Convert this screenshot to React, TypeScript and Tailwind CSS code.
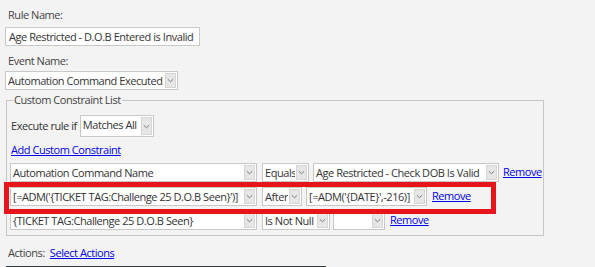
import React from "react"

const Chevron = () => (
  <svg width="7" height="5" viewBox="0 0 7 5">
    <path d="M0.8 1.2 L3.5 3.8 L6.2 1.2" stroke="#7a7a7a" strokeWidth="1" fill="none" />
  </svg>
)

function Select({ value, className }: { value: string; className: string }) {
  return (
    <div className={`flex h-[19px] shrink-0 bg-white border border-[#c8c8c8] ${className}`}>
      <span className="flex-1 pl-[2px] whitespace-nowrap overflow-hidden leading-[17px]">{value}</span>
      <span className="w-[11px] m-[1px] flex items-center justify-center bg-[#e6e6e6] border border-[#d6d6d6]">
        <Chevron />
      </span>
    </div>
  )
}

const Remove = ({ className = "" }: { className?: string }) => (
  <a className={`text-[#0000ee] underline leading-[17px] ${className}`}>Remove</a>
)

export default function App() {
  return (
    <div className="w-[595px] h-[267px] overflow-hidden bg-[#f3f3f3] text-[11px] text-[#333] font-['Open_Sans',sans-serif] tracking-[-0.45px]">
      <div className="pl-[5px] pt-[7px]">
        <div className="pl-[3px] leading-[16px] text-[#444]">Rule Name:</div>
        <div className="mt-[4px] w-[195px] h-[19px] bg-white border border-[#c8c8c8] pl-[3px] leading-[17px] whitespace-nowrap">
          Age Restricted - D.O.B Entered is Invalid
        </div>
        <div className="mt-[7px] pl-[3px] leading-[16px] text-[#444]">Event Name:</div>
        <Select value="Automation Command Executed" className="mt-[2px] w-[173px]" />

        {/* constraint list */}
        <fieldset className="mt-[3px] ml-[1px] w-[538px] border border-[#c6c6c6] pl-[3px] pb-[5px]">
          <legend className="ml-[3px] px-[1px] leading-[14px] text-[#444]">Custom Constraint List</legend>
          <div className="flex items-center mt-[8px]">
            <span className="ml-[1px] mr-[3px]">Execute rule if</span>
            <Select value="Matches All" className="w-[74px] h-[22px]" />
          </div>
          <a className="block mt-[5px] ml-[1px] text-[#0000ee] underline leading-[16px]">Add Custom Constraint</a>

          <div className="relative mt-[5px] flex flex-col gap-[5px]">
            <div className="flex">
              <Select value="Automation Command Name" className="w-[247px]" />
              <Select value="Equals" className="ml-[5px] w-[47px]" />
              <Select value="Age Restricted - Check DOB Is Valid" className="ml-[4px] w-[186px]" />
              <Remove className="ml-[4px]" />
            </div>
            <div className="flex">
              <Select value="[=ADM('{TICKET TAG:Challenge 25 D.O.B Seen}')]" className="w-[247px]" />
              <Select value="After" className="ml-[5px] w-[40px]" />
              <Select value="[=ADM('{DATE}',-216)]" className="ml-[4px] w-[121px]" />
              <Remove className="ml-[5px]" />
            </div>
            <div className="flex">
              <Select value="{TICKET TAG:Challenge 25 D.O.B Seen}" className="w-[247px]" />
              <Select value="Is Not Null" className="ml-[5px] w-[68px]" />
              <Select value="" className="ml-[3px] w-[52px]" />
              <Remove className="ml-[5px]" />
            </div>
            {/* highlight */}
            <div className="absolute left-[-6px] top-[19px] w-[492px] h-[32px] border-[5px] border-[#e8141c]" />
          </div>
        </fieldset>

        <div className="flex mt-[9px] pl-[3px] leading-[16px]">
          <span className="text-[#444]">Actions:</span>
          <a className="ml-[5px] text-[#0000ee] underline">Select Actions</a>
        </div>
        <div className="mt-[5px] ml-[1px] w-[320px] h-[2px] bg-[#2f3640]" />
      </div>
    </div>
  )
}
